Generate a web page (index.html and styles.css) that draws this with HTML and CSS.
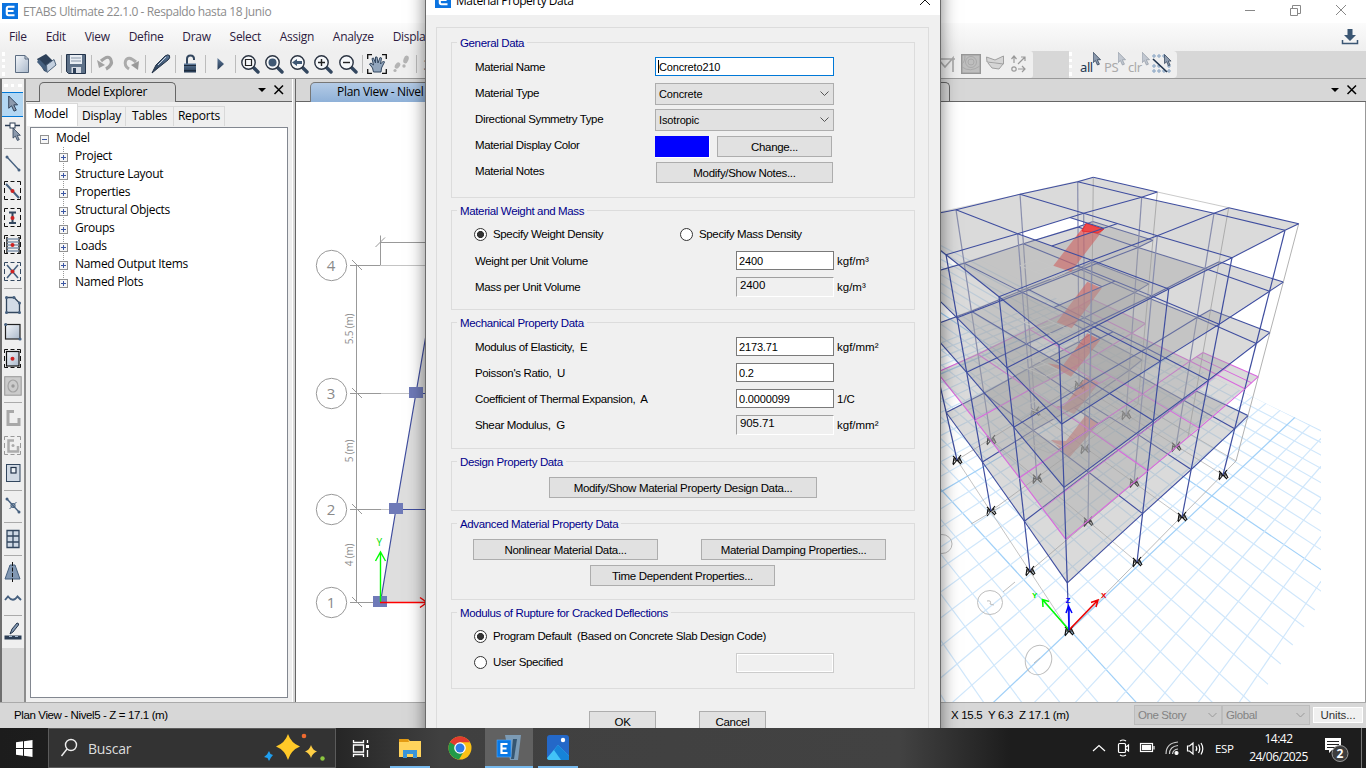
FILE: index.html
```html
<!DOCTYPE html>
<html lang="en">
<head>
<meta charset="utf-8">
<title>ETABS Ultimate 22.1.0 - Respaldo hasta 18 Junio</title>
<link rel="stylesheet" href="styles.css">
</head>
<body>
<svg class="defs" width="0" height="0">
  <defs>
    <linearGradient id="steel" x1="0" y1="0" x2="1" y2="1"><stop offset="0" stop-color="#f4f7fb"/><stop offset="1" stop-color="#a9b8ca"/></linearGradient>
    <linearGradient id="navy" x1="0" y1="0" x2="0" y2="1"><stop offset="0" stop-color="#5f7a9a"/><stop offset="1" stop-color="#22364f"/></linearGradient>
    <g id="cursor"><path d="M0 0V13L3 10.4L5.6 16L8 15L5.4 9.4H9.4Z" fill="#8c9aad" stroke="#2c3e55" stroke-width="1"/></g>
    <g id="lens"><path d="M13 13L18 18" stroke="#33475f" stroke-width="3.4" stroke-linecap="round"/><circle cx="8.5" cy="8.5" r="6.7" fill="#f6f8fa" stroke="#2b3442" stroke-width="1.4"/></g>
    <g id="logo"><rect width="16" height="16" fill="#0b73e0"/><path d="M12.5 3.7H6.5Q4.8 3.7 4.8 5.4V10.6Q4.8 12.3 6.5 12.3H12.5M4.8 8H11.6" fill="none" stroke="#fff" stroke-width="2.1"/></g>
    <g id="dash"><path d="M.5 4V.5H4M6.500 .5H10.500M13 .5H16.500V4M16.500 7V12M16.500 15V18.500H13M10.500 18.500H6.500M4 18.500H.5V15M.5 12V7" fill="none"/></g>
  </defs>
</svg>
<div class="app">
  <header class="titlebar">
    <svg class="applogo" viewBox="0 0 16 16"><use href="#logo"/></svg>
    <span class="apptitle">ETABS Ultimate 22.1.0 - Respaldo hasta 18 Junio</span>
    <svg class="winbtns" width="110" height="16" viewBox="0 0 110 16" fill="none" stroke="#888"><path d="M3 8.500H13M48.500 6.500H55.500V13.500H48.500ZM50.500 6.500V3.500H58.500V11.500H55.500M94 3L104 13M104 3L94 13"/></svg>
  </header>
  <nav class="menubar">
    <span>File</span><span>Edit</span><span>View</span><span>Define</span><span>Draw</span><span>Select</span><span>Assign</span><span>Analyze</span><span>Display</span>
    <svg class="download" width="18" height="18" viewBox="0 0 18 18"><path d="M6.500 1H11.500V7H15L9 13L3 7H6.500Z" fill="#3b5673"/><path d="M1.500 12V15.500H16.500V12" fill="none" stroke="#3b5673" stroke-width="1.500"/></svg>
  </nav>
  <div class="toolbar">
    <div class="tools">
      <i class="grip"></i>
      <svg viewBox="0 0 20 20"><path d="M3.500 1.500H13L16.500 5V18.500H3.500Z" fill="url(#steel)" stroke="#5c6d82"/><path d="M13 1.500V5H16.500" fill="none" stroke="#5c6d82"/></svg>
      <svg viewBox="0 0 20 20"><path d="M0 5L9 0L19 10L10 18L7 17Z" fill="#2d4059"/><path d="M2 5L9 12V18L0 8Z" fill="#46607f"/><path d="M9.500 11L17 5.500L19 11L10 18.500Z" fill="#c4d0df" stroke="#52677f"/></svg>
      <i class="sep"></i>
      <svg viewBox="0 0 20 20"><path d="M.5.5H19.500V19.500H2.500L.5 17.500Z" fill="#5d7087" stroke="#22334a"/><path d="M4 1H16V10H4Z" fill="#e8edf3"/><path d="M5.500 13H15V19H5.500Z" fill="#d5dbe4"/><path d="M7 14H10V19H7Z" fill="#2d4059"/><path d="M5 4H15M5 7H15" stroke="#8695a8"/></svg>
      <i class="sep"></i>
      <svg viewBox="0 0 20 20"><path d="M5 7Q13 0 15 6Q17 11 10 15" fill="none" stroke="#a3a3a3" stroke-width="3.200"/><path d="M1 6L9 11L3 14Z" fill="#a3a3a3"/></svg>
      <svg viewBox="0 0 20 20"><path d="M15 8Q7 1 4.500 7Q3 12 8 15" fill="none" stroke="#ababab" stroke-width="3"/><path d="M18 7L10 11L17 16Z" fill="#999"/></svg>
      <i class="sep"></i>
      <svg viewBox="0 0 20 20"><path d="M1 19L5 11L14 2Q17 0 18.500 1.500Q19.500 4 17 6L7 14Z" fill="url(#navy)" stroke="#243347"/><path d="M7 11L15 3" stroke="#cbd5e2"/></svg>
      <i class="sep"></i>
      <svg viewBox="0 0 20 20"><path d="M7 10V5Q7 1.500 10.500 1.500T14 5V6" fill="none" stroke="#33475f" stroke-width="2"/><rect x="4" y="9.500" width="12" height="9" fill="url(#navy)"/><path d="M4 11.500H16M4 16.500H16" stroke="#1c2a3c"/></svg>
      <i class="sep"></i>
      <svg viewBox="0 0 20 20"><path d="M7.500 4L14 10L7.500 16Z" fill="url(#navy)"/></svg>
      <i class="sep"></i>
      <svg viewBox="0 0 20 20"><use href="#lens"/><path d="M5.500 5.500H11.500V11.500H5.500Z" fill="none" stroke="#222" stroke-width="1.200"/></svg>
      <svg viewBox="0 0 20 20"><use href="#lens"/><circle cx="8.500" cy="8.500" r="4" fill="#3f5874"/></svg>
      <svg viewBox="0 0 20 20"><use href="#lens"/><path d="M3 8.500L8 5V7H13V10H8V12Z" fill="#3f5874"/></svg>
      <svg viewBox="0 0 20 20"><use href="#lens"/><path d="M5 8.500H12M8.500 5V12" stroke="#222" stroke-width="1.400"/></svg>
      <svg viewBox="0 0 20 20"><use href="#lens"/><path d="M5 8.500H12" stroke="#222" stroke-width="1.400"/></svg>
      <i class="sep"></i>
      <svg viewBox="0 0 20 20"><path d="M.7 5V.7H5M15 .7H19.300V5M19.300 15V19.300H15M5 19.300H.7V15" fill="none" stroke="#111" stroke-width="1.300"/><path d="M6.500 18L5.500 14L2.500 10L4 9L6.500 11L5 4.500L6.500 4L8.500 9L8.500 3H10L11 9L13 3.500L14.500 4L13.500 10L16.500 7L17.500 8L14.500 14L14 18Z" fill="#92a6bd" stroke="#33475f"/></svg>
      <svg viewBox="0 0 20 20"><g fill="#b4b4b4"><ellipse cx="5.500" cy="11.500" rx="2.300" ry="3.500" transform="rotate(35 5.500 11.500)"/><circle cx="3" cy="16.500" r="1.600"/><ellipse cx="14" cy="5.500" rx="2.500" ry="4" transform="rotate(20 14 5.500)"/><circle cx="12" cy="12" r="1.700"/></g></svg>
      <i class="sep"></i>
      <span class="threed">3-d</span>
    </div>
    <div class="tools right1">
      <svg viewBox="0 0 20 20" fill="none" stroke="#aaa" stroke-width="1.700"><path d="M2 18V5L9 13L17 4V18M4 5H19"/></svg>
      <svg viewBox="0 0 20 20"><rect x=".7" y=".7" width="18.600" height="18.600" fill="#bebebe" stroke="#979797" stroke-width="1.400"/><g fill="none" stroke="#aaa"><circle cx="10" cy="8" r="3"/><circle cx="10" cy="8" r="5.500"/><path d="M1 13Q9 19 19 12M4 1Q4 8 1 10"/></g></svg>
      <svg viewBox="0 0 20 20" fill="#d5d5d5" stroke="#a0a0a0"><path d="M1.500 3L10 6L18.500 2V10L2 8ZM3 9L7 14L14 15L18 10"/></svg>
      <svg viewBox="0 0 20 20" fill="none" stroke="#999" stroke-width="1.200"><path d="M5 9V2M2.500 5L5 2L7.500 5M9 10L16 3M12 3H16V7M9 15H16M13 12L16 15L13 18"/><circle cx="5" cy="15" r="2.200"/></svg>
    </div>
    <div class="tools right2">
      <i class="grip"></i>
      <span class="sel on">all<svg viewBox="0 0 10 17"><use href="#cursor"/></svg></span>
      <span class="sel">PS<svg viewBox="0 0 10 17"><use href="#cursor"/></svg></span>
      <span class="sel">clr<svg viewBox="0 0 10 17"><use href="#cursor"/></svg></span>
      <svg class="dots" viewBox="0 0 20 20"><g fill="none" stroke="#7899bd"><circle cx="2" cy="2" r="1.200"/><circle cx="7" cy="2" r="1.200"/><circle cx="12" cy="2" r="1.200"/><circle cx="2" cy="12" r="1.200"/><circle cx="7" cy="12" r="1.200"/><circle cx="17" cy="12" r="1.200"/><circle cx="2" cy="17" r="1.200"/><circle cx="7" cy="17" r="1.200"/><circle cx="12" cy="17" r="1.200"/><circle cx="17" cy="17" r="1.200"/></g><path d="M1 5L15 18" stroke="#22364f" stroke-width="1.700"/><g transform="translate(12.500 .5) scale(.7)"><use href="#cursor"/></g></svg>
    </div>
  </div>

  <main class="work">
    <aside class="palette">
      <i class="hgrip"></i>
      <svg class="active" viewBox="0 0 18 20"><g transform="translate(5 1)"><use href="#cursor"/></g></svg>
      <svg viewBox="0 0 18 20"><path d="M1 4.500H16" stroke="#2c3e55" stroke-width="1.500"/><rect x="6" y="2" width="5" height="5" fill="#fff" stroke="#2c3e55"/><g transform="translate(9 7) scale(.78)"><use href="#cursor"/></g></svg>
      <i class="hsep"></i>
      <svg viewBox="0 0 18 20"><path d="M3 3L15 16" stroke="#46607f" stroke-width="1.400"/><circle cx="3" cy="3" r="1.500" fill="#46607f"/><circle cx="15" cy="16" r="1.500" fill="#46607f"/></svg>
      <svg viewBox="0 0 18 20"><use href="#dash" stroke="#111"/><path d="M2 3L15 17" stroke="#46607f" stroke-width="2"/><circle cx="8.500" cy="10" r="2" fill="#c22"/></svg>
      <svg viewBox="0 0 18 20"><use href="#dash" stroke="#111"/><path d="M5 4.500H12M5 15H12M8.500 4V16" stroke="#33475f" stroke-width="2"/><circle cx="8.500" cy="10" r="2" fill="#c22"/></svg>
      <svg viewBox="0 0 18 20"><path d="M3 2V18M15 2V18" stroke="#222" stroke-width="1.500"/><path d="M3 4H15M3 7H15M3 10H15M3 13H15M3 16H15" stroke="#8195ad" stroke-width="1.500"/><use href="#dash" stroke="#111"/><circle cx="8.500" cy="10" r="2" fill="#c22"/></svg>
      <svg viewBox="0 0 18 20"><use href="#dash" stroke="#33475f"/><path d="M3 3L14 16M14 3L3 16" stroke="#46607f" stroke-width="1.600"/><circle cx="8.500" cy="9.500" r="2" fill="#c22"/></svg>
      <i class="hsep"></i>
      <svg viewBox="0 0 18 20"><path d="M2.500 2.500H10L15.500 8V17.500H2.500Z" fill="#d3dce7" stroke="#33475f" stroke-width="1.300"/><g fill="#46607f"><circle cx="2.500" cy="2.500" r="1.500"/><circle cx="10" cy="2.500" r="1.500"/><circle cx="15.500" cy="8" r="1.500"/><circle cx="2.500" cy="17.500" r="1.500"/><circle cx="15.500" cy="17.500" r="1.500"/></g></svg>
      <svg viewBox="0 0 18 20"><rect x="1.500" y="2.500" width="14.500" height="14.500" fill="url(#steel)" stroke="#222" stroke-width="1.200"/><circle cx="1.700" cy="2.500" r="1.600" fill="#46607f"/><circle cx="16" cy="17" r="1.600" fill="#46607f"/></svg>
      <svg viewBox="0 0 18 20"><rect x="2.500" y="2.500" width="12.500" height="14.500" fill="url(#steel)" stroke="#111" stroke-width="1.200"/><use href="#dash" stroke="#111"/><circle cx="8.500" cy="9.800" r="2" fill="#c22"/></svg>
      <svg viewBox="0 0 18 20"><rect x=".7" y=".7" width="16.500" height="18.500" fill="#cbcbcb" stroke="#979797"/><ellipse cx="9" cy="10" rx="5" ry="6" fill="none" stroke="#a3a3a3" stroke-width="1.200"/><circle cx="9" cy="10" r="1.700" fill="#989898"/></svg>
      <i class="hsep"></i>
      <svg viewBox="0 0 18 20"><path d="M10 2.500H4V15.500H15V9" fill="none" stroke="#a8a8a8" stroke-width="3"/></svg>
      <svg viewBox="0 0 18 20"><use href="#dash" stroke="#999"/><path d="M10 4.500H4.500V15.500H14V10" fill="none" stroke="#adadad" stroke-width="2.500"/><circle cx="9" cy="9.500" r="1.500" fill="#aaa"/></svg>
      <svg viewBox="0 0 18 20"><rect x="2.500" y="1.500" width="13.500" height="17" fill="#d0d9e4" stroke="#33475f"/><rect x="7" y="4.500" width="5" height="5.500" fill="#edf2f7" stroke="#22334a" stroke-width="1.200"/></svg>
      <i class="hsep"></i>
      <svg viewBox="0 0 18 20"><path d="M3 3L15 16" stroke="#46607f" stroke-width="1.400"/><circle cx="3" cy="3" r="1.500" fill="#46607f"/><circle cx="15" cy="16" r="1.500" fill="#46607f"/><circle cx="9" cy="9.500" r="2" fill="none" stroke="#46607f" stroke-width="1.200"/><path d="M5.500 13L12.500 6" stroke="#46607f"/></svg>
      <i class="hsep"></i>
      <svg viewBox="0 0 18 20"><path d="M3 1.500H15V18.500H3ZM9 1V19M3 7H15M3 13H15" fill="#cfd9e5" stroke="#33475f" stroke-width="1.300"/></svg>
      <i class="hsep"></i>
      <svg viewBox="0 0 18 20"><path d="M6 3H11L16 17H1Z" fill="#8298b3" stroke="#46607f"/><path d="M8.500 0V20" stroke="#111" stroke-dasharray="4 1.500"/></svg>
      <svg viewBox="0 0 18 20"><path d="M1 11L4 7.500Q9 14 13.500 7.500L17 11" fill="none" stroke="#46607f" stroke-width="1.900"/></svg>
      <i class="hsep"></i>
      <svg viewBox="0 0 18 20"><path d="M6 12L8 7L13 1Q15 1 14.500 3L9 10Z" fill="#8398b2" stroke="#22334a"/><rect x=".5" y="13.500" width="17" height="4" fill="#2c3e55"/><path d="M5 14.500H8M11 14.500H14" stroke="#a5bad2"/></svg>
    </aside>

    <section class="explorer">
      <div class="panehead"><span class="panetab">Model Explorer</span><svg width="30" height="12" viewBox="0 0 30 12"><path d="M1 4H9L5 8Z"/><path d="M17.500 1.500L26 10M26 1.500L17.500 10" stroke="#000" stroke-width="1.500"/></svg></div>
      <div class="tabs"><span class="cur">Model</span><span>Display</span><span>Tables</span><span>Reports</span></div>
      <div class="tree">
        <div class="root"><i class="box minus"></i>Model</div>
        <div class="kids">
          <div><i class="box"></i>Project</div><div><i class="box"></i>Structure Layout</div><div><i class="box"></i>Properties</div><div><i class="box"></i>Structural Objects</div><div><i class="box"></i>Groups</div><div><i class="box"></i>Loads</div><div><i class="box"></i>Named Output Items</div><div><i class="box"></i>Named Plots</div>
        </div>
      </div>
    </section>

    <section class="views">
      <div class="viewhead"><span class="viewtab">Plan View - Nivel</span><span class="tab3d"></span><svg width="30" height="12" viewBox="0 0 30 12"><path d="M1 4H9L5 8Z"/><path d="M17.500 1.500L26 10M26 1.500L17.500 10" stroke="#000" stroke-width="1.500"/></svg></div>
      <svg class="canvas" viewBox="296 102 1070 600" width="1070" height="600">
        <g class="plan">
          <path d="M380.500 602L396 509L416 393L432 300V602Z" fill="#dedede"/>
          <g fill="none" stroke="#999">
            <circle cx="331.500" cy="265.500" r="15.200"/><circle cx="331.500" cy="393.500" r="15.200"/><circle cx="331.500" cy="509.500" r="15.200"/><circle cx="331.500" cy="602.500" r="15.200"/>
            <path d="M356.500 265V602.500M350 265.500H380.500V235.500M380.500 242.500H430M350 393.500H381M350 509.500H381M350 602.500H375M352 260L362 270M352 388L362 398M352 504L362 514M352 597L362 607M375.500 247L385 237.500"/>
            <path d="M380 265.500H430M381 393.500H410M381 509.500H390" stroke="#c4c4c4"/>
          </g>
          <path d="M380.500 602L396 509L416 393L426 335M396 509.500H430M416 393.500H430" fill="none" stroke="#3f4d9e" stroke-width="1.200"/>
          <g fill="#6f7ab8"><rect x="373" y="596" width="14" height="11"/><rect x="389" y="503" width="14" height="11"/><rect x="409" y="387" width="14" height="11"/></g>
          <path d="M380.500 602V552M375.500 561L380.500 552L385.500 561" fill="none" stroke="#0f0" stroke-width="1.400"/>
          <path d="M380 602.500H426M420 597.500L427 602.500L420 607.500" fill="none" stroke="#f00" stroke-width="1.400"/>
          <text x="376.500" y="546" class="ylab">Y</text>
          <g class="num"><text x="331" y="270.500">4</text><text x="331" y="398.500">3</text><text x="331" y="514.500">2</text><text x="331" y="607.500">1</text></g>
          <g class="dim"><text transform="translate(353 329) rotate(-90)">5.5 (m)</text><text transform="translate(353 451) rotate(-90)">5 (m)</text><text transform="translate(353 555) rotate(-90)">4 (m)</text></g>
        </g>
        <g id="model"></g>
        <g fill="none" stroke="#bdbdbd"><ellipse cx="1038.500" cy="660" rx="13" ry="15" transform="rotate(20 1038.500 660)"/><ellipse cx="990" cy="602.500" rx="12.500" ry="12" /><ellipse cx="942" cy="544" rx="10" ry="9.500"/><path d="M1034 663L1040 658M987 601Q992 600 990 604L994 605M1003 592L1015 582M971 524L1000 507"/></g>
        <g fill="none" stroke-width="1.500"><path d="M1069 630L1043 600M1043 607L1042.500 599.500L1049 601.500" stroke="#0f0"/><path d="M1069 630L1097 601M1091 602.500L1098 600L1096 607" stroke="#e00"/><path d="M1069 630V608M1066 613L1068.500 606L1072 613" stroke="#00f"/></g>
        <g class="axis"><text x="1032" y="598" fill="#0e0">Y</text><text x="1065.500" y="603" fill="#00f">Z</text><text x="1101" y="598" fill="#e00">X</text></g>
        <path d="M1365.500 78V702" stroke="#999"/>
      </svg>
    </section>
  </main>

  <footer class="status">
    <span class="where">Plan View - Nivel5 - Z = 17.1 (m)</span>
    <span class="coords">X 15.5&nbsp; Y 6.3&nbsp; Z 17.1 (m)</span>
    <span class="drop">One Story<svg width="9" height="6"><path d="M.5 1L4.500 5L8.500 1" fill="none" stroke="#999"/></svg></span><span class="drop">Global<svg width="9" height="6"><path d="M.5 1L4.500 5L8.500 1" fill="none" stroke="#999"/></svg></span><span class="units">Units...</span>
  </footer>

  <div class="taskbar">
    <svg class="start" width="17" height="17" viewBox="0 0 17 17" fill="#fff"><path d="M0 2.300L7 1.300V8H0ZM8 1.200L16.500 0V8H8ZM0 9H7V15.700L0 14.700ZM8 9H16.500V17L8 15.800Z"/></svg>
    <div class="search"><svg width="18" height="20" viewBox="0 0 18 20" fill="none" stroke="#eee" stroke-width="1.400"><circle cx="11" cy="7" r="5.500"/><path d="M7 11L1.500 18"/></svg><span>Buscar</span>
      <svg class="spark" width="62" height="30" viewBox="0 0 62 30"><path d="M24 1Q27 10 36 13.500Q27 17 24 27Q21 17 12 13.500Q21 10 24 1Z" fill="#ffc928"/><path d="M47 12Q48.500 17 53 18.500Q48.500 20 47 25Q45.500 20 41 18.500Q45.500 17 47 12Z" fill="#ffcf45"/><path d="M5 18L6.500 21L9 22L7 24.500L5 28L3.500 25L0 24L3 21.500Z" fill="#1f9ff0"/><circle cx="40" cy="3" r="2.300" fill="#ee6a30"/><circle cx="58.500" cy="25.500" r="2.200" fill="#8cc63f"/></svg></div>
    <div class="task tv"><svg width="18" height="18" viewBox="0 0 18 18" fill="none" stroke="#fff" stroke-width="1.300"><path d="M1.500 1V3.500H11.500V1M1.500 6H11.500V13H1.500ZM1.500 18V15.500H11.500V18M15.500 1V4M15.500 11V18"/><path d="M15.500 6V9" stroke-width="3"/></svg></div>
    <div class="task open"><svg width="24" height="24" viewBox="0 0 24 24"><path d="M1 3H10L12 5H23V21H1Z" fill="#ffd35c"/><path d="M1 3H10L11 6H1Z" fill="#e39a12"/><path d="M5 22V14H19V22H15V18H9V22Z" fill="#3a95d8"/></svg></div>
    <div class="task"><svg width="24" height="26" viewBox="0 0 24 26"><circle cx="12" cy="13" r="11.500" fill="#fbc116"/><path d="M2 7.300A11.500 11.500 0 0 1 22 7.300H12L7 15.500Z" fill="#e33b2e"/><path d="M2 7.300A11.500 11.500 0 0 0 11 24.500L16 16Z" fill="#229a49"/><circle cx="12" cy="13" r="5.800" fill="#fff"/><circle cx="12" cy="13" r="4.500" fill="#2e7be6"/></svg></div>
    <div class="task focus"><svg width="26" height="28" viewBox="0 0 26 28"><path d="M9 1H25L22 26H14Z" fill="#7c9bb5"/><path d="M17 5H21L18 25H15Z" fill="#355672"/><rect x="1" y="6" width="14" height="17" fill="#0878e4" stroke="#55aaff" stroke-width=".6"/><path d="M11.500 10H5.500V19H11.500M5.500 14.500H10.500" fill="none" stroke="#fff" stroke-width="2.200"/></svg></div>
    <div class="task open ph"><svg width="24" height="26" viewBox="0 0 24 26"><rect x="1" y="0" width="22" height="25" rx="3" fill="#2468c8"/><path d="M1 23L12 10L23 21V22Q23 25 20 25H4Q1 25 1 23Z" fill="#42c3f7"/><path d="M12 10L23 21V25H15L8 15Z" fill="#1683d8"/><circle cx="17" cy="5" r="2.200" fill="#fff"/></svg></div>
    <div class="tray">
      <svg width="120" height="40" viewBox="0 0 120 40" fill="none" stroke="#fff" stroke-width="1.200"><path d="M7 23L13 17.500L19 23"/><rect x="32.500" y="15.500" width="7" height="9" rx="1"/><path d="M40 19L42.500 17V23L40 21M34 13Q37 11 40 13M34 27Q37 29 40 27"/><rect x="54.500" y="15.500" width="12" height="8"/><rect x="56.500" y="17.500" width="8" height="4" fill="#fff"/><path d="M68 18V21.500"/><path d="M80 26Q80 15 92 14M83.500 26Q83.500 18.500 92 17.500M86.500 26Q87 21.500 92 21" stroke="#ccc"/><circle cx="90.500" cy="25" r="1.500" fill="#fff"/><path d="M101.500 18H103.500L107 15V26L103.500 23H101.500ZM110 18Q111.500 20.500 110 23M112.500 16.500Q115 20.500 112.500 25M115 15Q118.500 20.500 115 26.500"/></svg>
    </div>
    <span class="lang">ESP</span>
    <div class="clock"><span>14:42</span><span>24/06/2025</span></div>
    <svg class="notif" width="28" height="28" viewBox="0 0 28 28"><path d="M1 2H17V14H8L5 17V14H1Z" fill="#fff"/><path d="M3 5.500H15M3 8.500H15M3 11.500H11" stroke="#222"/><circle cx="16" cy="17.500" r="8" fill="#3d3d3d" stroke="#999"/><text x="16" y="22">2</text></svg>
    <i class="desk"></i>
  </div>
</div>

<div class="dialog">
  <div class="dtitle"><svg width="16" height="16" viewBox="0 0 16 16"><use href="#logo"/></svg><span>Material Property Data</span><svg class="x" width="12" height="12" viewBox="0 0 12 12"><path d="M1 1L11 11M11 1L1 11" stroke="#111"/></svg></div>
  <div class="frame">
    <section class="group g1"><h2>General Data</h2>
      <div class="row"><label>Material Name</label><span class="edit focused">Concreto210</span></div>
      <div class="row"><label>Material Type</label><span class="combo">Concrete<svg width="9" height="6"><path d="M.5 .5L4.500 4.500L8.500 .5" fill="none" stroke="#555"/></svg></span></div>
      <div class="row"><label>Directional Symmetry Type</label><span class="combo">Isotropic<svg width="9" height="6"><path d="M.5 .5L4.500 4.500L8.500 .5" fill="none" stroke="#555"/></svg></span></div>
      <div class="row"><label>Material Display Color</label><i class="swatch"></i><span class="btn chg">Change...</span></div>
      <div class="row"><label>Material Notes</label><span class="btn notes">Modify/Show Notes...</span></div>
    </section>
    <section class="group g2"><h2>Material Weight and Mass</h2>
      <div class="row radios"><span class="radio"><i class="dot on"></i>Specify Weight Density</span><span class="radio"><i class="dot"></i>Specify Mass Density</span></div>
      <div class="row n"><label>Weight per Unit Volume</label><span class="edit">2400</span><span>kgf/m³</span></div>
      <div class="row n"><label>Mass per Unit Volume</label><span class="ro">2400</span><span>kg/m³</span></div>
    </section>
    <section class="group g3"><h2>Mechanical Property Data</h2>
      <div class="row n"><label>Modulus of Elasticity,&nbsp; E</label><span class="edit">2173.71</span><span>kgf/mm²</span></div>
      <div class="row n"><label>Poisson's Ratio,&nbsp; U</label><span class="edit">0.2</span></div>
      <div class="row n"><label>Coefficient of Thermal Expansion,&nbsp; A</label><span class="edit">0.0000099</span><span>1/C</span></div>
      <div class="row n"><label>Shear Modulus,&nbsp; G</label><span class="ro">905.71</span><span>kgf/mm²</span></div>
    </section>
    <section class="group g4"><h2>Design Property Data</h2>
      <span class="btn design">Modify/Show Material Property Design Data...</span>
    </section>
    <section class="group g5"><h2>Advanced Material Property Data</h2>
      <div class="pair"><span class="btn">Nonlinear Material Data...</span><span class="btn">Material Damping Properties...</span></div>
      <span class="btn timed">Time Dependent Properties...</span>
    </section>
    <section class="group g6"><h2>Modulus of Rupture for Cracked Deflections</h2>
      <div class="row"><span class="radio"><i class="dot on"></i>Program Default&nbsp; (Based on Concrete Slab Design Code)</span></div>
      <div class="row n"><span class="radio"><i class="dot"></i>User Specified</span><span class="edit off"></span></div>
    </section>
    <div class="actions"><span class="btn">OK</span><span class="btn">Cancel</span></div>
  </div>
</div>
<script src="model.js"></script>
</body>
</html>
```
FILE: styles.css
```css
* { box-sizing: border-box; }
body { margin: 0; width: 1366px; height: 768px; overflow: hidden; position: relative; font: 12px "Open Sans", "Noto Sans", sans-serif; color: #000; letter-spacing: -.3px; }
.defs { position: absolute; }
.app { display: flex; flex-direction: column; height: 768px; background: #d7d7d7; }
.titlebar { height: 23px; background: #fff; display: flex; align-items: center; padding: 0 14px 1px 2px; color: #8c8c8c; }
.applogo { width: 16px; height: 16px; }
.apptitle { margin-left: 5px; letter-spacing: -.39px; flex: 1; }
.winbtns { margin-right: 0; margin-top: -3px; }
.menubar { height: 28px; background: linear-gradient(#fbfbfb, #efefef); display: flex; align-items: center; padding: 0 7px 2px 9px; color: #2d1b3f; white-space: nowrap; }
.menubar span { margin-right: 18.900px; }
.menubar .download { margin: 2px 0 0 auto; }
.toolbar { height: 27px; display: flex; background: #d7d7d7; }
.tools { display: flex; align-items: center; background: #efefef; height: 27px; padding-bottom: 1px; }
.toolbar > .tools:first-child { width: 900px; padding-left: 2px; }
.tools > svg { width: 20px; height: 20px; margin: 0 2.2px; flex: none; }
.grip { width: 8px; height: 24px; border-left: 3px dotted #fff; flex: none; }
.sep { width: 1.3px; height: 18px; background: #bcbcbc; margin: 0 2.1px; flex: none; }
.threed { color: #53657c; font-size: 14px; margin-left: 4px; }
.right1 { width: 133px; padding-left: 34px; border-radius: 0 3px 3px 0; }
.right2 { margin-left: 36px; width: 108px; border-radius: 0 4px 4px 0; }
.sel { display: flex; align-items: center; color: #aaa; width: 24px; font: 13px "Noto Sans", sans-serif; letter-spacing: -.4px; padding-top: 5px; white-space: nowrap; }
.sel svg { width: 8px; height: 14px; margin-top: -16px; opacity: .45; flex: none; }
.sel.on { color: #22364f; margin-left: 3px; }
.sel.on svg { opacity: 1; }
.tools > .dots { margin: 0; }

.work { height: 624px; display: flex; border-top: 1px solid #999; }
.palette { width: 26px; display: flex; flex-direction: column; align-items: center; border-left: 2px solid #6e6e6e; border-right: 2px solid #8d8d8d; padding-right: 1px; background: linear-gradient(#efefef 569px, #d7d7d7 569px); }
.palette svg { width: 20px; height: 27px; padding: 3px 1px 4px; flex: none; }
.palette .active { width: 21px; height: 25px; margin: 1px 0; background: #b3d7f3; border: solid #0078d7; border-width: 1px 0; padding: 2px; }
.hgrip { width: 18px; height: 3px; border-top: 3px dotted #fff; margin: 5px 0 4px; flex: none; }
.hsep { width: 18px; height: 6px; flex: none; background: linear-gradient(transparent 2.500px, #aaa 2.500px, #aaa 3.500px, transparent 3.500px); }

.explorer { width: 267px; background: #efefef; display: flex; flex-direction: column; border-right: 1px solid #fff; }
.panehead, .viewhead { height: 23px; display: flex; align-items: flex-end; background: #d7d7d7; border-bottom: 1px solid #666; flex: none; }
.panetab { width: 137px; height: 20px; margin: 0 auto -1px 13px; border: 1px solid #666; border-bottom: 0; border-radius: 5px 5px 0 0; background: #d9d9d9; text-align: center; line-height: 18px; padding-right: 1px; letter-spacing: -.38px; }
.panehead svg { margin: 0 5px 5px 0; }
.tabs { display: flex; align-items: flex-end; height: 24px; padding-left: 1px; flex: none; letter-spacing: -.2px; }
.tabs span { height: 20px; border: 1px solid #d9d9d9; border-bottom: 0; border-left: 0; line-height: 18px; text-align: center; width: 48px; }
.tabs .cur { width: 51px; height: 23px; background: #fff; line-height: 20px; padding-right: 2px; }
.tabs span:last-child { width: 51px; }
.tree { margin: 1px 4px 4px 4px; flex: 1; background: #fff; border: 1px solid #828790; padding: 1px 0 0 9px; line-height: 18px; letter-spacing: -.3px; }
.tree .root, .kids div { display: flex; align-items: center; height: 18px; }
.kids { margin-left: 19px; }
.kids div { background: repeating-linear-gradient(#999 0 1px, transparent 1px 2px) 4px 0 / 1px 18px no-repeat; }
.kids div:last-child { background-size: 1px 9px; }
.box { width: 9px; height: 9px; border: 1px solid #919191; margin: 3px 7px 0 0; flex: none; background: linear-gradient(#3b56a3, #3b56a3) center / 5px 1px no-repeat, linear-gradient(#3b56a3, #3b56a3) center / 1px 5px no-repeat, #f6f6f6; }
.box.minus { background: linear-gradient(#3b56a3, #3b56a3) center / 5px 1px no-repeat, #f6f6f6; }

.views { flex: 1; margin-left: 2px; border-left: 1px solid #666; display: flex; flex-direction: column; background: #fff; min-width: 0; }
.viewtab { width: 325px; height: 20px; margin: 0 0 -1px 14px; border: 1px solid #777; border-bottom: 0; border-radius: 5px 5px 0 0; background: linear-gradient(#b4cbe6, #8fb1d8); padding-left: 26px; line-height: 18px; }
.tab3d { width: 315px; height: 20px; margin-bottom: -1px; border: 1px solid #666; border-bottom: 0; border-radius: 5px 5px 0 0; }
.viewhead svg { margin: 0 6px 5px auto; }
.canvas { display: block; flex: none; }
.num { font: 15px "Open Sans", sans-serif; fill: #8a8a8a; text-anchor: middle; letter-spacing: 0; }
.dim { font: 10px "Open Sans", sans-serif; fill: #8f8f8f; text-anchor: middle; letter-spacing: -.2px; }
.ylab { font: 10px "Open Sans", sans-serif; fill: #0d0; }
.axis { font: bold 8px "Liberation Sans", sans-serif; }

.status { height: 26px; background: #d7d7d7; border-top: 1px solid #aaa; display: flex; align-items: center; font: 11.5px "Liberation Sans", sans-serif; letter-spacing: -.38px; padding: 0 0 2px 14px; }
.where { width: 937px; }
.coords { width: 183px; letter-spacing: -.3px; }
.drop { width: 88px; height: 20px; border: 1px solid #bcbcbc; background: #ccc; color: #838383; display: flex; align-items: center; justify-content: space-between; padding: 0 4px 0 3px; letter-spacing: -.4px; }
.units { width: 50px; height: 16px; margin-left: 3px; background: #f0f0f0; border: 1px solid #fff; text-align: center; color: #333; line-height: 14px; letter-spacing: -.1px; }

.taskbar { height: 40px; background: linear-gradient(90deg, #1c1c1c 0, #242424 330px, #404040 440px, #424242 900px, #1d1d1d 1010px); display: flex; align-items: center; position: relative; z-index: 3; color: #fff; }
.start { margin: 0 15px 0 16px; }
.search { width: 288px; height: 40px; border: 1px solid #5b5b5b; background: #333; display: flex; align-items: center; padding: 0 9px 0 11px; font-size: 14px; color: #ddd; letter-spacing: -.2px; }
.search span { margin-left: 10px; flex: 1; }
.task { width: 50px; height: 40px; display: flex; align-items: center; justify-content: center; }
.task.tv { width: 49px; }
.open, .focus { background: linear-gradient(#76b9ed, #76b9ed) center bottom / 40px 2px no-repeat; }
.focus { width: 48px; background: linear-gradient(#76b9ed, #76b9ed) center bottom / 48px 2px no-repeat, #616161; }
.ph { width: 50px; }
.tray { margin-left: auto; width: 120px; height: 40px; flex: none; }
.lang { width: 31px; padding-left: 9px; font-size: 11.5px; letter-spacing: -.4px; flex: none; }
.clock { width: 81px; display: flex; flex-direction: column; text-align: center; line-height: 18px; font-size: 12px; letter-spacing: -.5px; margin-left: 1px; }
.notif { margin: 4px 0 0 5px; width: 28px; }
.notif text { font: bold 12px "Open Sans", sans-serif; fill: #fff; text-anchor: middle; letter-spacing: 0; }
.desk { width: 1px; height: 40px; background: #777; margin: 0 4px 0 9px; }

.dialog { position: absolute; left: 425px; top: -16px; width: 516px; height: 760px; background: #f0f0f0; border: 1px solid #6b6b6b; box-shadow: 0 0 16px rgba(0, 0, 0, .5); z-index: 2; font: 11.5px "Liberation Sans", sans-serif; letter-spacing: -.36px; }
.dtitle { height: 30px; background: #fff; display: flex; align-items: center; padding: 0 9px; font: 12px "Open Sans", sans-serif; letter-spacing: -.45px; }
.dtitle span { margin-left: 5px; }
.dtitle .x { margin-left: auto; }
.frame { margin: 12px 10px 0; width: 493px; height: 717px; border: 1px solid #dcdcdc; padding: 14px 13px 0 14px; }
.group { border: 1px solid #dcdcdc; }
.group h2 { font: inherit; color: #00008b; margin: -7px 0 4px 5px; padding: 0 3px; line-height: 15px; height: 14px; width: fit-content; background: #f0f0f0; }
.g1 { height: 156px; margin-bottom: 12px; }
.g2 { height: 100px; margin-bottom: 12px; }
.g3 { height: 127px; margin-bottom: 12px; }
.g4 { height: 50px; margin-bottom: 12px; }
.g5 { height: 77px; margin-bottom: 12px; }
.g6 { height: 77px; }
.row { height: 26px; display: flex; align-items: center; padding-left: 23px; }
.row label { width: 180px; white-space: nowrap; }
.row.n label { width: 261px; }
.row.n > span:last-child:not(.edit) { margin-left: 3px; letter-spacing: 0; }
.edit, .combo { width: 179px; height: 19px; border: 1px solid #7a7a7a; background: #fff; padding-left: 3px; line-height: 18px; font-size: 11px; letter-spacing: -.15px; }
.edit { margin-bottom: 2px; }
.n .edit { width: 98px; padding-left: 2px; }
.focused { border-color: #0078d7; background: linear-gradient(#000, #000) 2px 2px / 1px 13px no-repeat #fff; }
.combo { height: 22px; border-color: #adadad; background: #e1e1e1; display: flex; align-items: center; justify-content: space-between; padding: 1px 4px 0 3px; margin-top: 1px; }
.ro { width: 98px; height: 20px; border: 1px solid; border-color: #a0a0a0 #fff #fff #a0a0a0; padding-left: 3px; line-height: 15px; letter-spacing: -.1px; }
.n .off { border-color: #ccc; background: #f0f0f0; height: 20px; box-shadow: inset 0 0 0 1px #fff; margin: 2px 0 0; }
.btn { height: 21px; border: 1px solid #adadad; background: #e1e1e1; text-align: center; line-height: 20px; display: block; white-space: nowrap; letter-spacing: -.32px; }
.swatch { width: 55px; height: 22px; background: #00f; border: 1px solid #fff; border-width: 0 1px 1px 0; margin-top: 3px; }
.chg { width: 115px; margin: 2px 0 0 7px; }
.notes { width: 177px; margin: 3px 0 0 1px; }
.group.g1 h2 { margin-bottom: 5px; }
.group.g1 { padding-bottom: 0; }
.g1 h2 + .row { margin-top: -1px; }
.group.g3 h2 { margin-bottom: 4px; }
.group.g2 h2 { margin-bottom: 3px; }
.radios { margin-bottom: 1px; }
.radio { display: flex; align-items: center; margin-left: -1px; white-space: nowrap; }
.radios .radio:first-child { width: 207px; }
.g6 .n .radio { width: 262px; }
.dot { width: 13px; height: 13px; border: 1px solid #333; border-radius: 50%; margin-right: 6px; background: #fff; flex: none; }
.dot.on { background: radial-gradient(circle, #333 3.300px, #fff 3.800px); }
.design { width: 268px; margin: 8px 0 0 97px; }
.group.g4 h2, .group.g5 h2 { margin-bottom: 0; }
.group.g6 h2 { margin-bottom: 3px; }
.pair { display: flex; gap: 43px; margin: 8px 0 5px 21px; }
.pair .btn { width: 185px; }
.timed { width: 185px; margin-left: 138px; }
.actions { display: flex; gap: 43px; margin: 22px 0 0 138px; }
.actions .btn { width: 67px; height: 24px; }
```
FILE: model.js
```js
// Building view: column grid [y][x] as top and base screen positions.
const top5 = [
  [[1059, 345], [1168.7, 289], [1232, 257.7], [1285, 230.3], [1298.7, 223.7]],
  [[999, 296.7], [1091.7, 260.3], [1157.3, 235.7], [1214, 213.3], [1228.7, 207.7]],
  [[946, 254.7], [1017.7, 233.7], [1083.7, 213.3], [1141.7, 197.3], [1157.3, 192]],
  [[902.5, 220], [956, 209.7], [1020, 194.3], [1077.7, 181.7], [1093.3, 177.3]]
];
const base = [
  [[1069, 631], [1137, 562], [1182, 517], [1223, 475], [1236, 461]],
  [[1030, 571], [1088, 521.7], [1134, 482.7], [1176, 446.7], [1188, 437]],
  [[991, 511], [1037, 478.7], [1085, 449], [1126, 415], [1138, 404]],
  [[957, 460], [991, 440], [1035, 411.7], [1079, 385], [1091, 376]]
];
const depth = [
  [1.66, 1.56, 1.5, 1.44, 1.42], [1.52, 1.44, 1.4, 1.35, 1.34],
  [1.42, 1.37, 1.33, 1.3, 1.28], [1.36, 1.32, 1.28, 1.25, 1.24]
];
const levels = [0, .2515, .439, .626, .813, 1];
// Stair flights and landings, one outline per storey.
const stairs = [
  null,
  [[1086, 415], [1099, 423], [1069, 458], [1051, 440], [1066, 441]],
  [[1086, 377], [1099, 383], [1074, 414], [1056, 406], [1064, 406]],
  [[1087.3, 333.3], [1100.3, 340], [1071, 376.7], [1047.7, 363.3], [1062.7, 365.7]],
  [[1087.3, 281.7], [1101.7, 288.3], [1071.7, 328.3], [1056.7, 322.3]],
  [[1086.3, 223.3], [1103.7, 229.3], [1071, 271.7], [1053.3, 265.7]]
];
const out = [];
const mix = (a, b, t) => [a[0] + (b[0] - a[0]) * t, a[1] + (b[1] - a[1]) * t];
const at = (x, y, l) => {
  const t = levels[l], f = t / (t + depth[y][x] * (1 - t));
  return mix(base[y][x], top5[y][x], f);
};
const pts = list => 'M' + list.map(p => p[0].toFixed(1) + ' ' + p[1].toFixed(1)).join('L');
const line = (a, b, color, w = 1.1) => out.push(`<path d="${pts([a, b])}" stroke="${color}" stroke-width="${w}" fill="none"/>`);
// Point inside the stair bay, u along x and v from the back beam.
const bay = (u, v, l) => mix(mix(at(1, 2, l), at(2, 2, l), u), mix(at(1, 1, l), at(2, 1, l), u), v);

out.push('<clipPath id="ground"><path d="M930 235L1265 403L1321 430V600L1257 702H930Z"/></clipPath><clipPath id="view"><path d="M930 102H1365V702H930Z"/></clipPath><g clip-path="url(#view)"><g clip-path="url(#ground)">');
for (let i = -16; i < 20; i++) {
  const x = 1134 + i * 38;
  line([515, 25], [515 + (x - 515) * 1.05, 733.8], i % 10 ? '#d0e7fb' : '#a0d0f8', 1.2);
}
for (let j = -24; j < 8; j++) {
  const x = 996 + j * 40.8;
  line([1673, 60], [1673 + (x - 1673) * 1.05, 732], j % 10 ? '#d0e7fb' : '#a0d0f8', 1.2);
}
out.push('</g>');
for (let y = 0; y < 4; y++) line(base[y][0], base[y][4], '#aaa', .8);
for (let x = 0; x < 5; x++) line(base[0][x], base[3][x], '#b5b5b5', .8);
line([1157.3, 192], [1228.7, 207.7], '#bbb', .8);

const support = ([x, y]) => out.push(`<path d="M${x - 4} ${y - 4}L${x + 4} ${y + 4}M${x + 4} ${y - 5}L${x - 4} ${y + 5}M${x - 4} ${y}H${x + 4}M${x - 3} ${y - 2}L${x - 4} ${y + 4}M${x + 2} ${y - 3}L${x + 5} ${y + 3}" stroke="#111" stroke-width="1.2" fill="none"/>`);
for (let y = 0; y < 4; y++) for (let x = 0; x < 4; x++) support(base[y][x]);

for (let l = 1; l < 6; l++) {
  for (let y = 3; y >= 0; y--) for (let x = 4; x >= 0; x--) {
    line(at(x, y, l - 1), at(x, y, l), x === 4 ? '#b2b2b2' : y === 0 || x === 0 ? '#3f4e9f' : '#7880b4', x === 4 ? 1 : 1.2);
  }
  out.push(`<path d="${pts(stairs[l])}Z" fill="rgba(235,60,58,.62)"/>`);
  const m = stairs[l][3];
  out.push(`<path d="${pts([[m[0] - 33, m[1]], [m[0] - 17, m[1] - 6], [m[0] + 12, m[1] + 7], [m[0] - 2, m[1] + 13]])}ZM${m[0] - 18} ${m[1] + 6}L${m[0] - 2} ${m[1] + 1}" fill="none" stroke="#dedede"/>`);
  const v = (x, y) => at(x, y, l);
  const outline = pts([v(0, 0), v(4, 0), v(4, 1), v(3, 1), v(3, 2), v(4, 2), v(4, 3), v(0, 3), v(0, 2), v(0, 1)]) + 'Z';
  const hole = pts([bay(0, 0, l), bay(.79, 0, l), bay(.79, .46, l), bay(0, .46, l)]) + 'Z';
  out.push(`<path d="${outline}${hole}" fill="rgba(163,163,163,.4)" fill-rule="evenodd"/>`);
  if (l === 5) out.push('<path d="M1086.300 223.300L1103.700 229.300L1098 233L1082 231Z" fill="#ee4848" stroke="#e22" stroke-width=".8"/>');
  const c = l === 2 ? '#d968de' : '#3f4e9f';
  for (let y = 0; y < 4; y++) for (let x = 0; x < 4; x++) line(v(x, y), v(x + 1, y), c);
  for (let x = 0; x < 5; x++) {
    line(v(x, 0), v(x, 1), c);
    if (x < 4) line(v(x, 1), v(x, 2), c);
    line(v(x, 2), v(x, 3), c);
  }
  line(bay(0, .46, l), bay(1, .46, l), c);
  line(bay(.79, 0, l), bay(.79, .46, l), c);
  if (l === 2) {
    line(mix(v(3, 0), v(4, 0), .5), mix(v(3, 1), v(4, 1), .5), c, 1);
    line(mix(v(0, 0), v(0, 1), .5), mix(v(4, 0), v(4, 1), .5), c, .8);
  }
}
out.push('</g>');
document.getElementById('model').innerHTML = out.join('');
```
